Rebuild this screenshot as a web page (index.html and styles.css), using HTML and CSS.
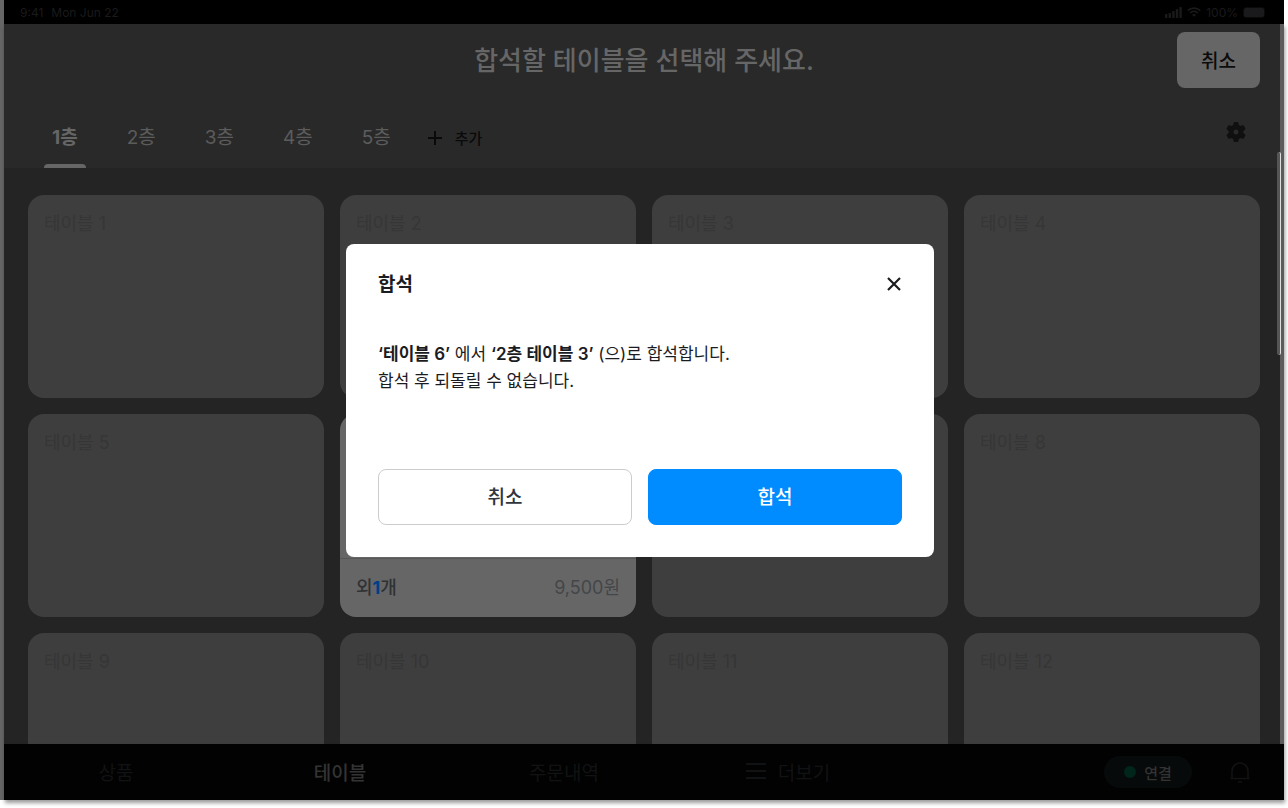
FILE: index.html
```html
<!DOCTYPE html>
<html lang="ko">
<head>
  <meta charset="UTF-8">
  <meta name="viewport" content="width=device-width, initial-scale=1.0">
  <title>합석</title>
  <link rel="stylesheet" href="styles.css">
</head>
<body>

<div class="app">
  <!-- 상태 표시줄 -->
  <div class="status-bar">
    <div class="status-left">
      <span>9:41</span>
      <span>Mon Jun 22</span>
    </div>
    <div class="status-right">
      <svg width="17" height="11" viewBox="0 0 17 11" fill="currentColor">
        <rect x="0" y="7" width="2.4" height="4" rx="0.6"/>
        <rect x="3.6" y="6" width="2.4" height="5" rx="0.6"/>
        <rect x="7.2" y="4" width="2.4" height="7" rx="0.6"/>
        <rect x="10.8" y="2" width="2.4" height="9" rx="0.6"/>
        <rect x="14.4" y="0" width="2.4" height="11" rx="0.6"/>
      </svg>
      <svg width="14" height="10" viewBox="0 0 14 10" fill="none" stroke="currentColor" stroke-width="1.7">
        <path d="M0.8 3.6C4.3 0.3 9.7 0.3 13.2 3.6"/>
        <path d="M3.1 6C5.3 3.9 8.7 3.9 10.9 6"/>
        <path d="M5 7.8C6.1 6.8 7.9 6.8 9 7.8L7 9.8Z" fill="currentColor" stroke="none"/>
      </svg>
      <span>100%</span>
      <svg width="23" height="11" viewBox="0 0 23 11">
        <rect x="0.5" y="0.5" width="21" height="10" rx="2.5" fill="none" stroke="currentColor" opacity="0.4"/>
        <rect x="1" y="1" width="20" height="9" rx="1.5" fill="currentColor"/>
      </svg>
    </div>
  </div>

  <div class="page">
    <header class="header">
      <div class="header-top">
        <h1>합석할 테이블을 선택해 주세요.</h1>
        <button class="btn-cancel">취소</button>
      </div>
      <div class="tabs">
        <button class="tab active">1층</button>
        <button class="tab">2층</button>
        <button class="tab">3층</button>
        <button class="tab">4층</button>
        <button class="tab">5층</button>
        <button class="tab-add">
          <svg width="14" height="14" viewBox="0 0 14 14" stroke="currentColor" stroke-width="2"><path d="M7 0V14M0 7H14"/></svg>
          추가
        </button>
        <button class="btn-setting" aria-label="설정">
          <svg width="24" height="24" viewBox="0 0 24 24" fill="currentColor" stroke="currentColor" stroke-width="1.4" stroke-linejoin="round">
            <path fill-rule="evenodd" d="M10.4 2.800h3.200l.7 2.700 2 1.100 2.700-.8 1.700 2.900-2 2v2.600l2 2-1.700 2.900-2.700-.8-2 1.100-.7 2.700h-3.200l-.7-2.700-2-1.100-2.700.8-1.700-2.900 2-2v-2.600l-2-2 1.700-2.900 2.700.8 2-1.100ZM12 8.800a3.200 3.200 0 1 0 0 6.400a3.200 3.200 0 1 0 0-6.400Z"/>
          </svg>
        </button>
      </div>
    </header>

    <!-- 테이블 목록 -->
    <main class="table-grid">
      <div class="card">테이블 1</div>
      <div class="card">테이블 2</div>
      <div class="card">테이블 3</div>
      <div class="card">테이블 4</div>
      <div class="card">테이블 5</div>
      <div class="card in-use">
        테이블 6
        <div class="card-footer">
          <span>외<b>1</b>개</span>
          <span class="price">9,500원</span>
        </div>
      </div>
      <div class="card">테이블 7</div>
      <div class="card">테이블 8</div>
      <div class="card">테이블 9</div>
      <div class="card">테이블 10</div>
      <div class="card">테이블 11</div>
      <div class="card">테이블 12</div>
    </main>
    <div class="scroll-thumb"></div>
  </div>

  <nav class="bottom-nav">
    <a href="#">상품</a>
    <a href="#" class="active">테이블</a>
    <a href="#">주문내역</a>
    <a href="#">
      <svg width="20" height="16" viewBox="0 0 20 16" stroke="currentColor" stroke-width="2"><path d="M0 1H20M0 8H20M0 15H20"/></svg>
      더보기
    </a>
    <div class="nav-right">
      <span class="connect"><i class="dot"></i>연결</span>
      <button class="btn-bell" aria-label="알림">
        <svg width="24" height="24" viewBox="0 0 24 24" fill="none" stroke="currentColor" stroke-width="1.6">
          <path d="M4 18.500V11a8 8 0 0 1 16 0v7.500M2.500 18.500H21.500M10 22H14"/>
        </svg>
      </button>
    </div>
  </nav>

  <!-- 합석 확인 팝업 -->
  <div class="overlay">
    <div class="modal" role="dialog" aria-labelledby="modalTitle">
      <div class="modal-header">
        <h2 id="modalTitle">합석</h2>
        <button class="btn-close" aria-label="닫기">
          <svg width="16" height="16" viewBox="0 0 16 16" stroke="currentColor" stroke-width="2.2"><path d="M2 2L14 14M14 2L2 14"/></svg>
        </button>
      </div>
      <p class="modal-text"><b>‘테이블 6’</b> 에서 <b>‘2층 테이블 3’</b> (으)로 합석합니다.<br>합석 후 되돌릴 수 없습니다.</p>
      <div class="modal-buttons">
        <button class="btn">취소</button>
        <button class="btn primary">합석</button>
      </div>
    </div>
  </div>
</div>

</body>
</html>
```

FILE: styles.css
```css
* {
  box-sizing: border-box;
}
body {
  min-height: 100vh;
  margin: 0;
  background: #fff;
  font-family: Inter, "Noto Sans CJK KR", sans-serif;
}
h1, h2, p {
  margin: 0;
}
button {
  padding: 0;
  border: none;
  background: none;
  color: inherit;
  font-family: inherit;
  cursor: pointer;
}
svg {
  display: block;
  flex-shrink: 0;
}
.app {
  position: relative;
  display: flex;
  flex-direction: column;
  height: calc(100vh - 8px);
  margin-right: 4px;
  border-left: 4px solid #666;
}
.page, .bottom-nav {
  box-shadow: 1px 3px 4px rgba(0,0,0,0.4);
}

/* 상태 표시줄 */
.status-bar {
  display: flex;
  justify-content: space-between;
  align-items: center;
  height: 24px;
  flex-shrink: 0;
  padding: 0 18px 0 16px;
  background: #000;
  color: #1a1a1c;
  font-size: 12px;
}
.status-left {
  display: flex;
  gap: 8px;
}
.status-right {
  display: flex;
  align-items: center;
  gap: 5px;
}

.page {
  position: relative;
  display: flex;
  flex-direction: column;
  flex: 1;
  min-height: 0;
  border-right: 4px solid #5c5c5c;
  background: #242424;
}
.header {
  padding: 8px 20px 0 24px;
  background: #292929;
}
.header-top {
  display: grid;
  grid-template-columns: 1fr auto 1fr;
  align-items: center;
}
.header-top h1 {
  grid-column: 2;
  padding-top: 2px;
  color: #666;
  font-size: 26px;
  font-weight: 500;
  line-height: 38px;
}
.btn-cancel {
  justify-self: end;
  width: 83px;
  height: 56px;
  padding-bottom: 2px;
  border-radius: 8px;
  background: #666;
  color: #0c0c0c;
  font-size: 19px;
  font-weight: 500;
}
.tabs {
  display: flex;
  gap: 33px;
  height: 80px;
  padding: 20px 12px 0 16px;
}
.tab {
  position: relative;
  padding: 0 8px 6px;
  color: #5c5c5c;
  font-size: 19px;
}
.tab.active {
  color: #666;
  font-weight: 700;
}
.tab.active::after {
  content: "";
  position: absolute;
  left: 0;
  right: 0;
  bottom: 0;
  height: 4px;
  border-radius: 4px 4px 0 0;
  background: #666;
}
.tab-add {
  display: flex;
  align-items: center;
  gap: 13px;
  margin-left: -4px;
  padding-bottom: 1px;
  color: #0a0a0a;
  font-size: 15px;
  font-weight: 500;
}
.btn-setting {
  align-self: center;
  margin-left: auto;
  padding-bottom: 12px;
  color: #101010;
}

/* 테이블 목록 */
.table-grid {
  display: grid;
  grid-template-columns: repeat(4, 1fr);
  grid-auto-rows: 203px;
  gap: 16px;
  flex: 1;
  min-height: 0;
  overflow: hidden;
  padding: 27px 20px 0 24px;
}
.card {
  display: flex;
  flex-direction: column;
  justify-content: space-between;
  padding: 15px 16px 0;
  border-radius: 16px;
  background: #3e3e3e;
  color: #363636;
  font-size: 18px;
  line-height: 28px;
}
.card.in-use {
  background: #666;
}
.card-footer {
  display: flex;
  justify-content: space-between;
  align-items: center;
  height: 59px;
  margin: 0 -16px;
  padding: 0 16px;
  border-top: 1px solid #585858;
  color: #303234;
  font-weight: 500;
}
.card-footer b {
  color: #003f88;
  font-weight: 700;
}
.card-footer .price {
  color: #444649;
  font-weight: 400;
}
.scroll-thumb {
  position: absolute;
  top: 128px;
  right: -1px;
  width: 4px;
  height: 203px;
  border-right: 1px solid #ddd;
  border-radius: 2px;
  background: #555;
}

/* 하단 메뉴 */
.bottom-nav {
  position: relative;
  display: flex;
  height: 56px;
  flex-shrink: 0;
  background: #020202;
}
.bottom-nav a {
  display: flex;
  justify-content: center;
  align-items: center;
  gap: 12px;
  width: 17.5%;
  padding-bottom: 2px;
  color: #111214;
  font-size: 19px;
  text-decoration: none;
}
.bottom-nav a.active {
  color: #333;
  font-weight: 500;
}
.nav-right {
  display: flex;
  align-items: center;
  gap: 36px;
  margin-left: auto;
  padding-right: 32px;
}
.connect {
  display: flex;
  justify-content: center;
  align-items: center;
  gap: 8px;
  width: 88px;
  height: 32px;
  border-radius: 16px;
  background: #070a0b;
  color: #333;
  font-size: 15px;
  font-weight: 500;
}
.dot {
  width: 12px;
  height: 12px;
  border-radius: 50%;
  background: #00251a;
}
.btn-bell {
  color: #111214;
}

/* 팝업 */
.overlay {
  position: absolute;
  top: 0;
  right: 4px;
  bottom: -1px;
  left: -4px;
  display: flex;
  justify-content: center;
  align-items: center;
}
.modal {
  width: 588px;
  max-width: 90%;
  padding: 24px 32px 32px;
  border-radius: 8px;
  background: #fff;
  color: #1b1c1f;
}
.modal-header {
  display: flex;
  justify-content: space-between;
  align-items: center;
  height: 32px;
}
.modal-header h2 {
  padding-bottom: 3px;
  font-size: 19px;
  font-weight: 700;
}
.modal-text {
  margin: 41px 0 74px;
  font-size: 17px;
  line-height: 27px;
}
.modal-text b {
  font-weight: 600;
}
.modal-buttons {
  display: flex;
  gap: 16px;
}
.btn {
  flex: 1;
  height: 56px;
  padding-bottom: 3px;
  border: 1px solid #ccc;
  border-radius: 8px;
  background: #fff;
  color: #2f353d;
  font-size: 19px;
  font-weight: 500;
}
.btn.primary {
  border-color: #008cff;
  background: #008cff;
  color: #fff;
}
```
